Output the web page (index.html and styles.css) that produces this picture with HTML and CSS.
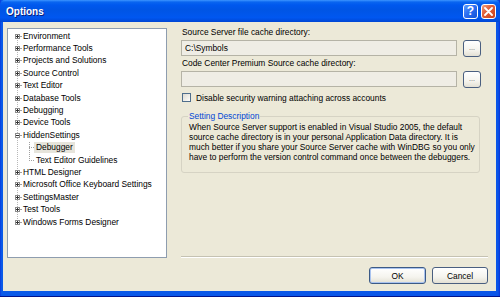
FILE: index.html
```html
<!DOCTYPE html>
<html>
<head>
<meta charset="utf-8">
<title>Options</title>
<link rel="stylesheet" href="styles.css">
</head>
<body>
<div class="window">
  <div class="titlebar">
    <span class="title">Options</span>
    <div class="caption-btns">
      <span class="cbtn help">?</span>
      <span class="cbtn close"><svg width="9" height="9" viewBox="0 0 9 9"><path d="M1 1L8 8M8 1L1 8" stroke="#fff" stroke-width="1.8" stroke-linecap="round"/></svg></span>
    </div>
  </div>
  <div class="client">
    <div class="tree">
      <ul class="roots">
        <li class="row"><svg class="exp" width="5" height="5" viewBox="0 0 5 5"><rect x="0.5" y="0.5" width="4" height="4" fill="#fff" stroke="#8c8c8c"/><path d="M1 2.5H4M2.5 1V4" stroke="#333" stroke-width="1"/></svg><span class="conn"></span><span class="lbl">Environment</span></li>
        <li class="row"><svg class="exp" width="5" height="5" viewBox="0 0 5 5"><rect x="0.5" y="0.5" width="4" height="4" fill="#fff" stroke="#8c8c8c"/><path d="M1 2.5H4M2.5 1V4" stroke="#333" stroke-width="1"/></svg><span class="conn"></span><span class="lbl">Performance Tools</span></li>
        <li class="row"><svg class="exp" width="5" height="5" viewBox="0 0 5 5"><rect x="0.5" y="0.5" width="4" height="4" fill="#fff" stroke="#8c8c8c"/><path d="M1 2.5H4M2.5 1V4" stroke="#333" stroke-width="1"/></svg><span class="conn"></span><span class="lbl">Projects and Solutions</span></li>
        <li class="row"><svg class="exp" width="5" height="5" viewBox="0 0 5 5"><rect x="0.5" y="0.5" width="4" height="4" fill="#fff" stroke="#8c8c8c"/><path d="M1 2.5H4M2.5 1V4" stroke="#333" stroke-width="1"/></svg><span class="conn"></span><span class="lbl">Source Control</span></li>
        <li class="row"><svg class="exp" width="5" height="5" viewBox="0 0 5 5"><rect x="0.5" y="0.5" width="4" height="4" fill="#fff" stroke="#8c8c8c"/><path d="M1 2.5H4M2.5 1V4" stroke="#333" stroke-width="1"/></svg><span class="conn"></span><span class="lbl">Text Editor</span></li>
        <li class="row"><svg class="exp" width="5" height="5" viewBox="0 0 5 5"><rect x="0.5" y="0.5" width="4" height="4" fill="#fff" stroke="#8c8c8c"/><path d="M1 2.5H4M2.5 1V4" stroke="#333" stroke-width="1"/></svg><span class="conn"></span><span class="lbl">Database Tools</span></li>
        <li class="row"><svg class="exp" width="5" height="5" viewBox="0 0 5 5"><rect x="0.5" y="0.5" width="4" height="4" fill="#fff" stroke="#8c8c8c"/><path d="M1 2.5H4M2.5 1V4" stroke="#333" stroke-width="1"/></svg><span class="conn"></span><span class="lbl">Debugging</span></li>
        <li class="row"><svg class="exp" width="5" height="5" viewBox="0 0 5 5"><rect x="0.5" y="0.5" width="4" height="4" fill="#fff" stroke="#8c8c8c"/><path d="M1 2.5H4M2.5 1V4" stroke="#333" stroke-width="1"/></svg><span class="conn"></span><span class="lbl">Device Tools</span></li>
        <li class="row"><svg class="exp" width="5" height="5" viewBox="0 0 5 5"><rect x="0.5" y="0.5" width="4" height="4" fill="#fff" stroke="#8c8c8c"/><path d="M1 2.5H4" stroke="#333" stroke-width="1"/></svg><span class="conn"></span><span class="lbl">HiddenSettings</span></li>
        <li class="children">
          <div class="row child"><span class="cconn"></span><span class="lbl clbl sel">Debugger</span></div>
          <div class="row child"><span class="cconn"></span><span class="lbl clbl">Text Editor Guidelines</span></div>
        </li>
        <li class="row"><svg class="exp" width="5" height="5" viewBox="0 0 5 5"><rect x="0.5" y="0.5" width="4" height="4" fill="#fff" stroke="#8c8c8c"/><path d="M1 2.5H4M2.5 1V4" stroke="#333" stroke-width="1"/></svg><span class="conn"></span><span class="lbl">HTML Designer</span></li>
        <li class="row"><svg class="exp" width="5" height="5" viewBox="0 0 5 5"><rect x="0.5" y="0.5" width="4" height="4" fill="#fff" stroke="#8c8c8c"/><path d="M1 2.5H4M2.5 1V4" stroke="#333" stroke-width="1"/></svg><span class="conn"></span><span class="lbl">Microsoft Office Keyboard Settings</span></li>
        <li class="row"><svg class="exp" width="5" height="5" viewBox="0 0 5 5"><rect x="0.5" y="0.5" width="4" height="4" fill="#fff" stroke="#8c8c8c"/><path d="M1 2.5H4M2.5 1V4" stroke="#333" stroke-width="1"/></svg><span class="conn"></span><span class="lbl">SettingsMaster</span></li>
        <li class="row"><svg class="exp" width="5" height="5" viewBox="0 0 5 5"><rect x="0.5" y="0.5" width="4" height="4" fill="#fff" stroke="#8c8c8c"/><path d="M1 2.5H4M2.5 1V4" stroke="#333" stroke-width="1"/></svg><span class="conn"></span><span class="lbl">Test Tools</span></li>
        <li class="row"><svg class="exp" width="5" height="5" viewBox="0 0 5 5"><rect x="0.5" y="0.5" width="4" height="4" fill="#fff" stroke="#8c8c8c"/><path d="M1 2.5H4M2.5 1V4" stroke="#333" stroke-width="1"/></svg><span class="conn"></span><span class="lbl">Windows Forms Designer</span></li>
      </ul>
    </div>

    <div class="panel">
      <div class="label">Source Server file cache directory:</div>
      <div class="field-row">
        <div class="field">C:\Symbols</div>
        <span class="btn small">...</span>
      </div>
      <div class="label">Code Center Premium Source cache directory:</div>
      <div class="field-row">
        <div class="field"></div>
        <span class="btn small">...</span>
      </div>
      <div class="check-row">
        <span class="checkbox"></span>
        <span>Disable security warning attaching across accounts</span>
      </div>
      <fieldset class="group">
        <legend>Setting Description</legend>
        <p class="desc">When Source Server support is enabled in Visual Studio 2005, the default<br>source cache directory is in your personal Application Data directory. It is<br>much better if you share your Source Server cache with WinDBG so you only<br>have to perform the version control command once between the debuggers.</p>
      </fieldset>
      <div class="separator"></div>
    </div>

    <div class="footer">
      <span class="btn default">OK</span>
      <span class="btn cancel">Cancel</span>
    </div>
  </div>
</div>
</body>
</html>
```

FILE: styles.css
```css
* { box-sizing: border-box; }
html, body { margin: 0; padding: 0; }
body {
  width: 500px;
  height: 297px;
  overflow: hidden;
  font-family: "Liberation Sans", Arial, sans-serif;
  font-size: 8.4px;
  color: #000;
}
.window {
  width: 500px;
  height: 297px;
  display: flex;
  flex-direction: column;
  background: linear-gradient(to right, #0831d9 0, #0a55e8 1px, #0a5ae8 2px, #0a55e8 498px, #0831d9 500px);
  border-bottom: 1px solid #00138c;
}
.titlebar {
  height: 22px;
  flex: none;
  display: flex;
  align-items: center;
  justify-content: space-between;
  padding: 0 4px 0 6px;
  background: linear-gradient(to bottom, #3d95ff 0, #0a66f0 2px, #0058ee 5px, #0055e5 45%, #0057f0 80%, #0046d4 100%);
  border-radius: 5px 5px 0 0;
}
.title {
  color: #fff;
  font-weight: bold;
  font-size: 10px;
  text-shadow: 1px 1px 0 #0a1e7a;
  padding-top: 1px;
}
.caption-btns {
  display: flex;
  gap: 3px;
  align-items: center;
}
.cbtn {
  width: 15px;
  height: 15px;
  border: 1px solid #fff;
  border-radius: 3px;
  display: flex;
  align-items: center;
  justify-content: center;
  color: #fff;
}
.help {
  background: linear-gradient(135deg, #5c9bff 0%, #2a6cf0 50%, #1553d6 100%);
  font-weight: bold;
  font-size: 12px;
  line-height: 13px;
}
.close {
  background: linear-gradient(135deg, #f0a080 0%, #e2603a 40%, #c8431c 100%);
}
.client {
  flex: 1;
  margin: 0 4px 5px 3px;
  background: #ece9d8;
  display: grid;
  grid-template-columns: 160px 1fr;
  grid-template-rows: 231px auto;
  column-gap: 14px;
  padding: 5px 8px 0 4px;
}

/* tree */
.tree {
  margin-top: 1px;
  background: #fff;
  border: 1px solid #8e9daf;
  overflow: hidden;
}
.roots {
  list-style: none;
  margin: 0;
  padding: 1px 0 0 0;
  background-image: repeating-linear-gradient(to bottom, #b8b8b8 0 1px, transparent 1px 2px);
  background-repeat: no-repeat;
  background-size: 1px 186px;
  background-position: 9px 7px;
}
.row {
  height: 12.4px;
  display: flex;
  align-items: center;
  padding-left: 7px;
  white-space: nowrap;
}
.exp { flex: none; display: block; }
.conn {
  width: 2px;
  height: 1px;
  background: #a0a0a0;
}
.lbl {
  padding: 0 1px;
  line-height: 11px;
}
.children {
  background-image: repeating-linear-gradient(to bottom, #a0a0a0 0 1px, transparent 1px 2px);
  background-repeat: no-repeat;
  background-size: 1px 19px;
  background-position: 21px 0;
}
.row.child { padding-left: 21px; }
.cconn {
  width: 5px;
  height: 1px;
  background: repeating-linear-gradient(to right, #a0a0a0 0 1px, transparent 1px 2px);
}
.clbl { padding: 0 2px; }
.sel { background: #e6e4db; }

/* panel */
.panel {
  display: flex;
  flex-direction: column;
}
.label {
  line-height: 11px;
  height: 11px;
  padding-left: 1px;
}
.field-row {
  display: flex;
  gap: 6px;
  margin-top: 2px;
  margin-bottom: 2px;
  width: 300px;
  height: 16px;
}
.field {
  flex: 1;
  border: 1px solid #b5b3a6;
  background: #efede5;
  padding: 0 3px;
  line-height: 14px;
}
.btn {
  display: flex;
  align-items: center;
  justify-content: center;
  border: 1px solid #4a5f80;
  border-radius: 3px;
  background: linear-gradient(to bottom, #ffffff 0%, #f5f4ee 60%, #e3e0d4 100%);
  color: #000;
}
.btn.small {
  width: 18px;
  height: 17px;
  font-size: 7px;
  color: #555;
  padding-bottom: 2px;
}
.check-row {
  display: flex;
  align-items: center;
  gap: 5px;
  margin-top: 3px;
  height: 11px;
  padding-left: 1px;
}
.checkbox {
  width: 9px;
  height: 9px;
  border: 1px solid #4f6e8c;
  background: linear-gradient(135deg, #dcdad2 0%, #f4f3ee 70%, #fff 100%);
}
.group {
  margin: 8px 0 0 0;
  width: 299px;
  border: 1px solid #d6d3c4;
  border-radius: 3px;
  padding: 0 1px 10px 7px;
}
.group legend {
  color: #0046d5;
  padding: 0 1px;
  margin-left: -1px;
  line-height: 11px;
}
.desc {
  margin: 0;
  line-height: 10px;
  font-size: 8.4px;
  white-space: nowrap;
}
.separator {
  margin-top: auto;
  height: 2px;
  border-top: 1px solid #c5c2b2;
  border-bottom: 1px solid #fff;
}

/* footer */
.footer {
  grid-column: 2;
  display: flex;
  justify-content: flex-end;
  gap: 6px;
  padding-top: 9px;
}
.footer .btn {
  width: 57px;
  height: 17px;
}
.footer .btn.cancel { width: 56px; }
.btn.default {
  border-color: #3c5a86;
  box-shadow: inset 0 0 0 1px #a9c3ef;
}
```
